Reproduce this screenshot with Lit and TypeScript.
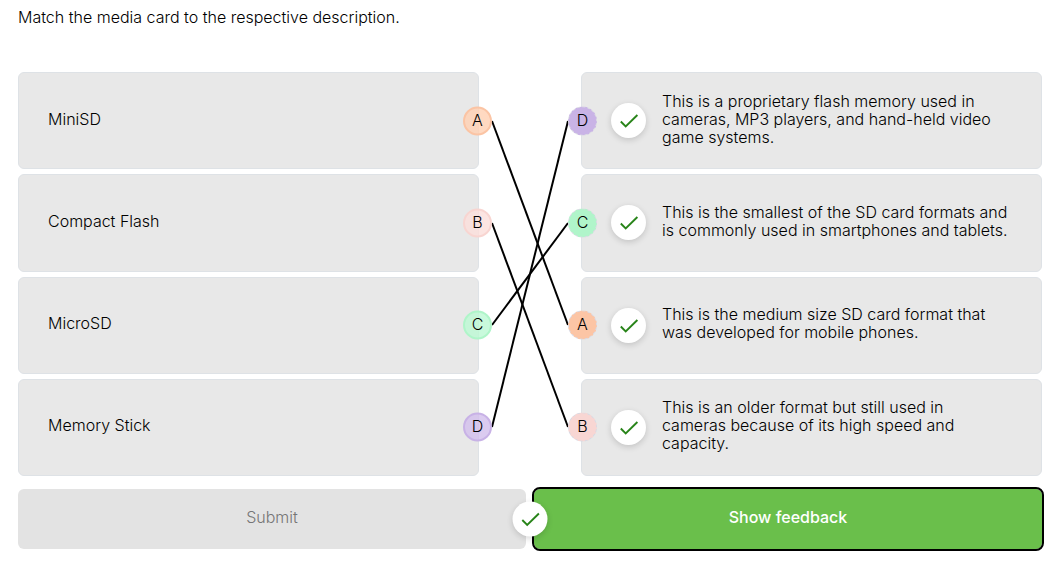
import { LitElement, html, svg, css } from "lit";
import { customElement, property } from "lit/decorators.js";

interface Item {
  key: string;
  text: string;
}

const CARDS: Item[] = [
  { key: "A", text: "MiniSD" },
  { key: "B", text: "Compact Flash" },
  { key: "C", text: "MicroSD" },
  { key: "D", text: "Memory Stick" },
];

const DESCRIPTIONS: Item[] = [
  {
    key: "D",
    text: "This is a proprietary flash memory used in cameras, MP3 players, and hand-held video game systems.",
  },
  {
    key: "C",
    text: "This is the smallest of the SD card formats and is commonly used in smartphones and tablets.",
  },
  {
    key: "A",
    text: "This is the medium size SD card format that was developed for mobile phones.",
  },
  {
    key: "B",
    text: "This is an older format but still used in cameras because of its high speed and capacity.",
  },
];

@customElement("check-mark")
class CheckMark extends LitElement {
  static styles = css`
    :host {
      display: block;
      flex: none;
      box-sizing: border-box;
      width: 35px;
      height: 35px;
      border-radius: 50%;
      background: #fff;
      box-shadow: 0 2px 6px rgba(0, 0, 0, 0.16);
    }
    .icon {
      display: block;
      width: 100%;
      height: 100%;
    }
  `;

  render() {
    return html`<svg class="icon" viewBox="0 0 35 35" role="img" aria-label="Correct">
      <path d="M9.8 18.5 L14.7 23.4 L26.4 12" fill="none" stroke="#288419" stroke-width="1.9" />
    </svg>`;
  }
}

@customElement("match-lines")
class MatchLines extends LitElement {
  @property({ attribute: false }) from: Item[] = [];
  @property({ attribute: false }) to: Item[] = [];

  static styles = css`
    :host {
      display: grid;
      padding: 0 13px;
    }
    .canvas {
      display: block;
      width: 100%;
      height: 100%;
      min-height: 0;
      overflow: visible;
    }
    .line {
      stroke: #000;
      stroke-width: 2px;
      vector-effect: non-scaling-stroke;
    }
  `;

  render() {
    const y = (i: number) => 49 + i * 102;
    return html`<svg class="canvas" viewBox="0 0 77 404" preserveAspectRatio="none" aria-hidden="true">
      ${this.from.map((item, i) => {
        const j = this.to.findIndex((other) => other.key === item.key);
        return svg`<line class="line" x1="0" y1=${y(i)} x2="77" y2=${y(j)} />`;
      })}
    </svg>`;
  }
}

@customElement("app-root")
class AppRoot extends LitElement {
  static styles = css`
    :host {
      display: block;
      padding: 8px 11px 24px 18px;
      font-family: Inter, "Liberation Sans", sans-serif;
      font-size: 16px;
      font-weight: 300;
      line-height: 18px;
      color: #000;
      background: #fff;
    }
    .prompt {
      margin: 0 0 46px;
    }
    .board {
      display: grid;
      grid-template-columns: minmax(0, 1fr) 102px minmax(0, 1fr);
      min-height: 404px;
    }
    .list {
      display: grid;
      grid-auto-rows: 1fr;
      gap: 5px;
      margin: 0;
      padding: 0;
      list-style: none;
    }
    .card {
      position: relative;
      display: flex;
      align-items: center;
      gap: 16px;
      box-sizing: border-box;
      padding: 16px 32px 16px 29px;
      border: 1px solid #dee2e6;
      border-radius: 6px;
      background: #e8e8e8;
      color: #000;
    }
    .text {
      margin: 0 0 4px;
    }
    .badge {
      position: absolute;
      top: 50%;
      transform: translateY(-50%);
      box-sizing: border-box;
      width: 29px;
      height: 29px;
      padding: 0 0 3px;
      border-radius: 50%;
      font: inherit;
      color: #000;
      text-align: center;
    }
    .start {
      right: -14px;
      border: 2px solid;
    }
    .end {
      left: -14px;
      border: 1px dashed #d9d9e3;
    }
    .start.a { background: rgba(255, 208, 178, 0.8); border-color: #fbc4a4; }
    .start.b { background: rgba(251, 222, 219, 0.8); border-color: #f8d5d1; }
    .start.c { background: rgba(188, 249, 211, 0.8); border-color: #aff5c9; }
    .start.d { background: rgba(210, 190, 236, 0.8); border-color: #c8b2e6; }
    .end.a { background: #fcc5a5; }
    .end.b { background: #f8d6d3; }
    .end.c { background: #b0f5ca; }
    .end.d { background: #c9b3e6; }
    .actions {
      position: relative;
      display: grid;
      grid-template-columns: 1fr 1fr;
      gap: 8px;
      margin-top: 13px;
    }
    .action {
      height: 60px;
      padding: 0 16px 4px;
      border: 0;
      border-radius: 6px;
      font: inherit;
    }
    .submit {
      background: #e3e3e3;
      color: #757575;
    }
    .feedback {
      background: #6abf4b;
      color: #fff;
      font-weight: 500;
      outline: 2px solid #000;
    }
    .result {
      position: absolute;
      top: 50%;
      left: 50%;
      transform: translate(-50%, -50%);
    }
  `;

  render() {
    return html`
      <p class="prompt">Match the media card to the respective description.</p>
      <div class="board">
        <ul class="list">
          ${CARDS.map(
            (item) => html`<li class="card">
              <p class="text">${item.text}</p>
              <button type="button" class="badge start ${item.key.toLowerCase()}">${item.key}</button>
            </li>`
          )}
        </ul>
        <match-lines .from=${CARDS} .to=${DESCRIPTIONS}></match-lines>
        <ul class="list">
          ${DESCRIPTIONS.map(
            (item) => html`<li class="card">
              <button type="button" class="badge end ${item.key.toLowerCase()}">${item.key}</button>
              <check-mark></check-mark>
              <p class="text">${item.text}</p>
            </li>`
          )}
        </ul>
      </div>
      <div class="actions">
        <button type="button" class="action submit" disabled>Submit</button>
        <button type="button" class="action feedback">Show feedback</button>
        <check-mark class="result"></check-mark>
      </div>
    `;
  }
}
